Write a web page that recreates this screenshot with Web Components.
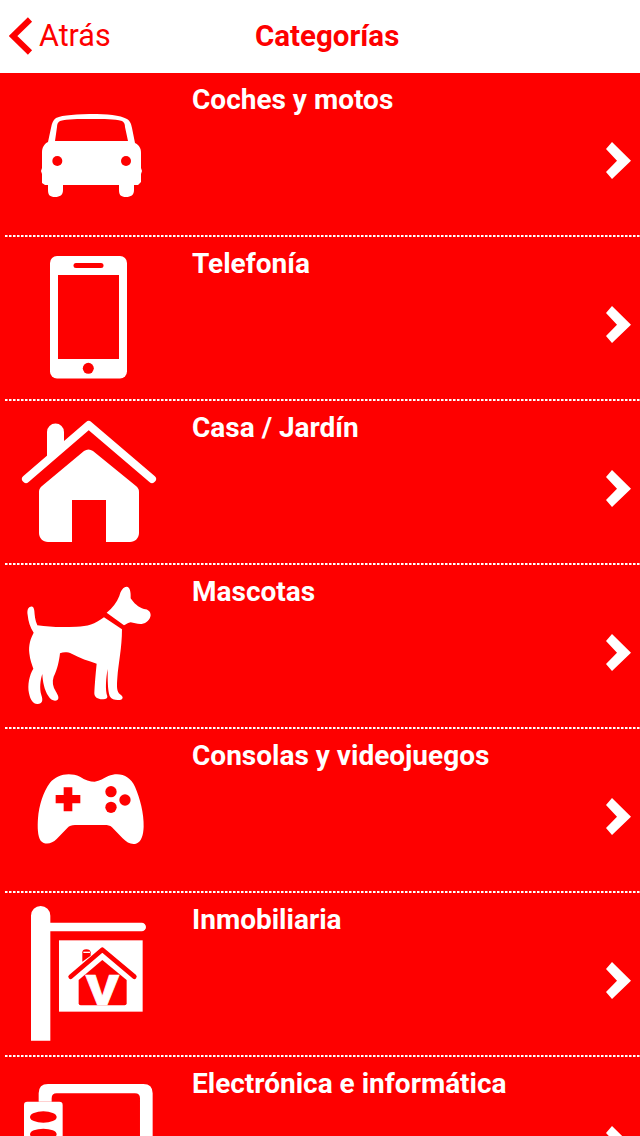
<!DOCTYPE html>
<html lang="es">
<head>
<meta charset="utf-8">
<title>Categorías</title>
<style>
  html, body { margin: 0; padding: 0; background: #fe0000; }
  body { height: 1136px; overflow: hidden; font-family: Roboto, "Liberation Sans", sans-serif; }
</style>
</head>
<body>
<app-header label="Categorías">Atrás</app-header>
<category-list>
  <category-row>
    <svg slot="icon" viewBox="0 73 176 164" width="176" height="164" fill="#fff">
      <path fill-rule="evenodd" d="M91 114c16 0 29 1 36 5 3 2 4 4 5 9l3 15c4 2 6 5 6 10v15l1 3-1 3v8l-3 3h-4v5c0 5-3 7-8 7s-7-2-7-7v-5H63v5c0 5-3 7-8 7s-7-2-7-7v-5h-3l-3-2v-9l-1-3 1-3v-16c0-4 2-8 6-10l3-14c1-5 2-8 5-10 7-3 20-4 41-4ZM60 121c-2 1-3 3-3 6l-2 14h73l-3-14c0-3-1-5-3-6-8-2-17-2-31-2s-23 0-31 2Z"/>
      <circle cx="57.300" cy="161" r="5" fill="#fe0000"/>
      <circle cx="126" cy="161" r="5" fill="#fe0000"/>
    </svg>
    Coches y motos
  </category-row>
  <category-row>
    <svg slot="icon" viewBox="0 237 176 164" width="176" height="164" fill="#fff">
      <rect x="50" y="256" width="77" height="122.500" rx="7"/>
      <rect x="58" y="275" width="61" height="84" fill="#fe0000"/>
      <rect x="73.500" y="263" width="30" height="5" rx="2.500" fill="#fe0000"/>
      <circle cx="88.300" cy="368.300" r="5.500" fill="#fe0000"/>
    </svg>
    Telefonía
  </category-row>
  <category-row>
    <svg slot="icon" viewBox="0 401 176 164" width="176" height="164" fill="#fff">
      <path d="M47 458v-26a8.500 8.500 0 0 1 17 0v16l-17 12Z"/>
      <path d="M26 479 88.700 425 152 479" fill="none" stroke="#fff" stroke-width="8" stroke-linecap="round" stroke-linejoin="round"/>
      <path d="M84 451c3-2 6-2 9 0l43 35c2 2 3 3 3 6v41c0 5-4 9-9 9h-24v-42H72v42H48c-5 0-9-4-9-9v-41c0-3 1-4 3-6Z"/>
    </svg>
    Casa / Jardín
  </category-row>
  <category-row>
    <svg slot="icon" viewBox="0 565 176 164" width="176" height="164" fill="#fff">
      <g transform="translate(0 570) scale(.3333)">
        <path d="M92 110C83 112 81 122 83 135 85 155 90 172 101 188 92 205 85 225 88 250 90 270 96 285 100 296 88 315 82 345 87 370 91 390 100 403 113 402 127 401 130 392 124 375 118 355 121 330 127 312 128 335 133 360 145 378 152 390 165 396 173 389 178 384 174 375 168 365 158 350 156 335 161 320 172 300 178 270 180 250 192 245 205 247 215 251 240 265 265 272 290 281 287 310 284 345 283 370 283 382 294 389 310 388 318 388 323 385 322 379 315 360 318 325 323 297 323 330 323 360 329 378 335 390 352 392 363 389 371 386 369 378 360 373 350 365 350 350 352 325 355 280 366 235 366 178L312 142C285 162 262 170 230 170 190 172 150 172 112 166 105 150 104 135 103 122 102 113 98 108 92 110Z"/>
        <path d="M320 128C338 113 350 98 358 78 362 62 370 50 380 50 390 51 393 65 392 85 402 100 415 112 432 117 445 118 452 125 452 136 450 150 440 160 425 162 412 163 402 158 392 157 385 158 378 163 372 166Z"/>
      </g>
    </svg>
    Mascotas
  </category-row>
  <category-row>
    <svg slot="icon" viewBox="0 729 176 164" width="176" height="164" fill="#fff">
      <g transform="translate(0 570) scale(.3333)">
        <path d="M150 638C170 615 205 605 240 620 255 630 270 635 284 635 300 633 310 625 325 618 360 605 390 618 405 650 420 685 432 730 431 770 430 795 425 815 408 821 395 825 380 818 368 805L336 772C330 766 322 765 315 765H225C215 765 208 767 202 774L170 807C155 822 135 826 122 812 113 800 112 770 114 745 117 705 130 665 150 638Z"/>
        <path fill="#fe0000" d="M191 652h26v23h24v25h-24v24h-26v-24h-24v-25h24Z"/>
        <circle cx="333" cy="665" r="17" fill="#fe0000"/>
        <circle cx="375" cy="690" r="17" fill="#fe0000"/>
        <circle cx="333" cy="712" r="17" fill="#fe0000"/>
      </g>
    </svg>
    Consolas y videojuegos
  </category-row>
  <category-row>
    <svg slot="icon" viewBox="0 893 176 164" width="176" height="164" fill="#fff">
      <g transform="translate(0 890) scale(.3333)">
        <path d="M93 452V77a29 29 0 0 1 58 0v21h274a13 13 0 0 1 0 26H151v328Z"/>
        <rect x="177" y="151" width="251" height="214"/>
        <g fill="#fe0000">
          <path d="M247 215v-28q0-9 12-9t13 9v10Z"/>
          <path d="M212 260 307 179 403 260" fill="none" stroke="#fe0000" stroke-width="14" stroke-linecap="round" stroke-linejoin="round"/>
          <path d="M307 210 380 270V340Q380 346 374 346H242Q236 346 236 340V270Z"/>
        </g>
        <rect x="250" y="185" width="20" height="4" fill="#fff"/>
        <text transform="translate(307 345) scale(1.18 1)" text-anchor="middle" font-family="Roboto, 'Liberation Sans', sans-serif" font-weight="900" font-size="128" fill="#fff" stroke="#fff" stroke-width="2">V</text>
      </g>
    </svg>
    Inmobiliaria
  </category-row>
  <category-row>
    <svg slot="icon" viewBox="0 1057 176 164" width="176" height="164" fill="#fff">
      <g transform="translate(0 890) scale(.3333)">
        <path fill-rule="evenodd" d="M116 635V610Q116 582 144 582H430Q458 582 458 610V738H420V625Q420 610 405 610H170Q155 610 155 625V635Z"/>
        <rect x="72" y="635" width="116" height="120" rx="10"/>
        <ellipse cx="130" cy="681" rx="40" ry="17" fill="#fe0000"/>
        <ellipse cx="130" cy="733" rx="40" ry="17" fill="#fe0000"/>
      </g>
    </svg>
    Electrónica e informática
  </category-row>
</category-list>
<script>
// Top bar: back link on the left, page title centred
class AppHeader extends HTMLElement {
  connectedCallback() {
    const shadow = this.attachShadow({ mode: "open" });
    shadow.innerHTML = `
      <style>
        :host { display: flex; align-items: center; height: 73px; padding: 0 0 2px 9px; box-sizing: border-box; background: #fff; color: #fe0000; font-size: 30.5px; }
        svg { flex: none; margin-right: 6px; }
        .back { display: flex; align-items: center; width: 240px; flex: none; }
        .title { font-size: 29.5px; font-weight: 700; margin-left: 6px; }
      </style>
      <div class="back">
        <svg width="24" height="38" viewBox="0 0 24 38"><path d="M21 2.500 4 19l17 16.500" fill="none" stroke="#fe0000" stroke-width="6"/></svg>
        <span><slot></slot></span>
      </div>
      <div class="title">${this.getAttribute("label")}</div>`;
  }
}

class CategoryList extends HTMLElement {
  connectedCallback() {
    const shadow = this.attachShadow({ mode: "open" });
    shadow.innerHTML = `
      <style>:host { display: block; height: 1063px; overflow: hidden; background: #fe0000; }</style>
      <slot></slot>`;
  }
}

// One category: icon, label at the top, chevron on the right, dotted line below
class CategoryRow extends HTMLElement {
  connectedCallback() {
    const shadow = this.attachShadow({ mode: "open" });
    shadow.innerHTML = `
      <style>
        :host { display: flex; height: 164px; position: relative; color: #fff; font-size: 28px; font-weight: 700; }
        .icon { flex: none; width: 176px; height: 164px; margin-right: 16px; }
        .label { flex: 1; padding-top: 11px; line-height: 32px; }
        .chevron { flex: none; width: 40px; margin-top: 68px; }
        .line { position: absolute; left: 5px; right: 0; bottom: 0; height: 2px; background: repeating-linear-gradient(90deg, #fff 0 2.500px, #ff8888 2.500px 3px, #fe0000 3px 4px); }
      </style>
      <div class="icon"><slot name="icon"></slot></div>
      <div class="label"><slot></slot></div>
      <svg class="chevron" width="40" height="40" viewBox="600 141 40 40"><polygon points="612,142 631,160.700 612,179 606,172 617,160.700 606,149" fill="#fff"/></svg>
      <div class="line"></div>`;
  }
}

customElements.define("app-header", AppHeader);
customElements.define("category-list", CategoryList);
customElements.define("category-row", CategoryRow);
</script>
</body>
</html>
